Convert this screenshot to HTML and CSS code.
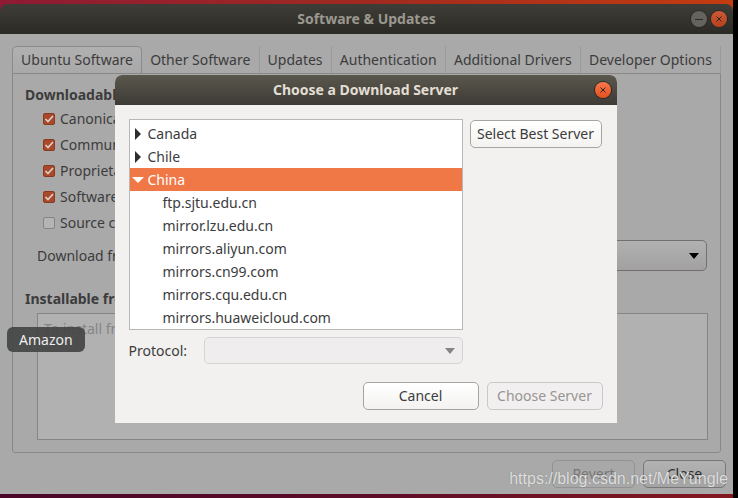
FILE: index.html
```html
<!DOCTYPE html>
<html lang="en">
<head>
    <meta charset="utf-8">
    <meta name="viewport" content="width=device-width, initial-scale=1.0">
    <title>Software &amp; Updates</title>
    <link rel="stylesheet" href="styles.css">
</head>
<body>
    <div class="desktop">
        <div class="window">
            <!-- title bar -->
            <header class="titlebar">
                <h1 class="title">Software &amp; Updates</h1>
                <div class="titleBtns">
                    <button class="winBtn" type="button" aria-label="Minimize">
                        <svg viewBox="0 0 16 16"><path d="M4 8.5h8"/></svg>
                    </button>
                    <button class="winBtn closeBtn" type="button" aria-label="Close window">
                        <svg viewBox="0 0 16 16"><path d="M5.5 5.5l5 5M10.5 5.5l-5 5"/></svg>
                    </button>
                </div>
            </header>

            <main class="windowBody">
                <div class="tabs" role="tablist">
                    <button class="tab active" type="button" role="tab" aria-selected="true">Ubuntu Software</button>
                    <button class="tab" type="button" role="tab">Other Software</button>
                    <button class="tab" type="button" role="tab">Updates</button>
                    <button class="tab" type="button" role="tab">Authentication</button>
                    <button class="tab" type="button" role="tab">Additional Drivers</button>
                    <button class="tab" type="button" role="tab">Developer Options</button>
                </div>

                <section class="panel">
                    <h2 class="heading">Downloadable from the Internet</h2>
                    <div class="checks">
                        <label class="check"><input type="checkbox" checked>Canonical-supported software (main)</label>
                        <label class="check"><input type="checkbox" checked>Community-maintained software (universe)</label>
                        <label class="check"><input type="checkbox" checked>Proprietary drivers for devices (restricted)</label>
                        <label class="check"><input type="checkbox" checked>Software restricted by copyright (multiverse)</label>
                        <label class="check"><input type="checkbox">Source code</label>
                    </div>
                    <div class="serverRow">
                        <label for="server">Download from:</label>
                        <div class="combo">
                            <select id="server"><option></option></select>
                            <svg class="arrow" viewBox="0 0 10 6"><path d="M0 0h10L5 6z"/></svg>
                        </div>
                    </div>
                    <h2 class="heading">Installable from CD-ROM/DVD</h2>
                    <div class="cdList">To install from a CD-ROM or DVD, insert the medium into the drive.</div>
                </section>

                <div class="actions">
                    <button class="btn dim" type="button" disabled>Revert</button>
                    <button class="btn dark" type="button">Close</button>
                </div>
            </main>

            <!-- server chooser -->
            <div class="dialog" role="dialog" aria-labelledby="dialogTitle">
                <header class="titlebar dialogBar">
                    <h2 class="title" id="dialogTitle">Choose a Download Server</h2>
                    <div class="titleBtns">
                        <button class="winBtn closeBtn" type="button" aria-label="Close dialog">
                            <svg viewBox="0 0 16 16"><path d="M5.5 5.5l5 5M10.5 5.5l-5 5"/></svg>
                        </button>
                    </div>
                </header>
                <div class="dialogBody">
                    <ul class="tree" role="tree">
                        <li class="node" role="treeitem"><svg viewBox="0 0 12 12"><path d="M3 0l6 6-6 6z"/></svg>Canada</li>
                        <li class="node" role="treeitem"><svg viewBox="0 0 12 12"><path d="M3 0l6 6-6 6z"/></svg>Chile</li>
                        <li class="node selected" role="treeitem" aria-selected="true"><svg viewBox="0 0 12 12"><path d="M0 3h12l-6 6z"/></svg>China</li>
                        <li class="node leaf" role="treeitem">ftp.sjtu.edu.cn</li>
                        <li class="node leaf" role="treeitem">mirror.lzu.edu.cn</li>
                        <li class="node leaf" role="treeitem">mirrors.aliyun.com</li>
                        <li class="node leaf" role="treeitem">mirrors.cn99.com</li>
                        <li class="node leaf" role="treeitem">mirrors.cqu.edu.cn</li>
                        <li class="node leaf" role="treeitem">mirrors.huaweicloud.com</li>
                    </ul>
                    <div class="side">
                        <button class="btn" type="button">Select Best Server</button>
                    </div>
                    <div class="protocol">
                        <label for="protocol">Protocol:</label>
                        <div class="combo">
                            <select id="protocol" disabled><option></option></select>
                            <svg class="arrow" viewBox="0 0 10 6"><path d="M0 0h10L5 6z"/></svg>
                        </div>
                    </div>
                </div>
                <footer class="dialogActions">
                    <button class="btn" type="button">Cancel</button>
                    <button class="btn" type="button" disabled>Choose Server</button>
                </footer>
            </div>
        </div>

        <div class="tooltip" role="tooltip">Amazon</div>
        <div class="watermark">https://blog.csdn.net/MeYungle</div>
    </div>
</body>
</html>
```
FILE: styles.css
```css
* {
    box-sizing: border-box;
}

body {
    margin: 0;
    background: #000;
    color: #3c3c3c;
    font: 14px/20px "Noto Sans", "Open Sans", sans-serif;
}

button, select {
    font: inherit;
    color: inherit;
}

h1, h2, ul {
    margin: 0;
    padding: 0;
    font-size: 14px;
}

/* wallpaper shows above and below the window */
.desktop {
    position: relative;
    min-height: 100vh;
    margin-right: 5px;
    padding: 4px 0;
    background:
        linear-gradient(90deg, #8e1a34, #a02a20 50%, #c43c10) top / 100% 12px no-repeat,
        linear-gradient(90deg, #4a0628, #5c0c28 50%, #841820);
}

.window {
    position: relative;
}

/* title bars */
.titlebar {
    display: flex;
    align-items: center;
    position: relative;
    height: 30px;
    padding: 0 6px;
    border-radius: 7px 7px 0 0;
    background: linear-gradient(#3e3d37, #2b2a26);
    color: #9b988f;
}

.title {
    flex: 1;
    text-align: center;
}

.titleBtns {
    display: flex;
    gap: 4px;
    position: absolute;
    right: 6px;
}

.winBtn {
    width: 16px;
    height: 16px;
    padding: 0;
    border: 0;
    border-radius: 50%;
    background: #65635d;
    box-shadow: 0 0 0 1px #2a2925;
}

.winBtn svg {
    display: block;
    fill: none;
    stroke: #2a2925;
    stroke-width: 1;
}

.closeBtn {
    background: linear-gradient(#cc5a36, #b8401c);
}

/* main window */
.windowBody {
    padding: 12px 7px 6px 12px;
    background: #a9a9a9;
}

.tabs {
    display: flex;
    height: 27px;
    margin-right: 5px;
}

.tab {
    flex: 1 1 auto;
    padding: 0;
    border: 0;
    border-right: 1px solid #9a9a9a;
    background: none;
    white-space: nowrap;
}

.tab.active {
    border: 1px solid #8a8a8a;
    border-bottom: 0;
    border-radius: 5px 5px 0 0;
    background: linear-gradient(#b0b0b0, #a9a9a9);
}

.panel {
    margin-right: 5px;
    padding: 11px 12px 12px;
    border: 1px solid #888;
    border-radius: 0 0 3px 3px;
}

.checks {
    padding: 1px 0 0 18px;
}

.check {
    display: flex;
    align-items: center;
    gap: 5px;
    height: 26px;
}

.check input {
    appearance: none;
    width: 12px;
    height: 12px;
    margin: 0;
    border: 1px solid #858585;
    border-radius: 2px;
    background: #b4b4b4;
}

.check input:checked {
    border-color: #8a3a20;
    background: #a8492c url("data:image/svg+xml,%3Csvg xmlns='http://www.w3.org/2000/svg' viewBox='0 0 10 10'%3E%3Cpath d='M1.5 5l2.5 2.5L9 2' fill='none' stroke='%23e0cfc6' stroke-width='1.7'/%3E%3C/svg%3E");
}

.serverRow {
    display: flex;
    align-items: center;
    gap: 12px;
    padding: 4px 1px 18px 12px;
}

.combo {
    flex: 1;
    position: relative;
}

.combo select {
    appearance: none;
    display: block;
    width: 100%;
    height: 31px;
    border: 1px solid #707070;
    border-radius: 5px;
    background: linear-gradient(#b1b1b1, #a2a0a1);
}

.arrow {
    position: absolute;
    top: 50%;
    right: 8px;
    width: 10px;
    height: 6px;
    margin-top: -3px;
    fill: #000;
    pointer-events: none;
}

.cdList {
    height: 127px;
    margin: 4px 0 0 12px;
    padding: 5px 6px;
    border: 1px solid #858585;
    background: #b2b1b2;
    color: #858585;
}

.actions {
    display: flex;
    justify-content: flex-end;
    gap: 8px;
    padding-top: 7px;
}

/* buttons */
.btn {
    min-width: 83px;
    height: 28px;
    padding: 0;
    border: 1px solid #a5a49f;
    border-radius: 5px;
    background: linear-gradient(#fff, #f3f2f1);
}

.btn:disabled {
    border-color: #cbc9c7;
    background: #f1eff0;
    color: #989590;
}

.btn.dim {
    border-color: #929292;
    background: #a8a8a8;
    color: #777;
}

.btn.dark {
    border-color: #777;
    background: linear-gradient(#b2b2b2, #a4a4a4);
    color: #2c2c2c;
}

/* dialog */
.dialog {
    position: absolute;
    top: 71px;
    left: 0;
    right: 2px;
    width: 502px;
    margin: 0 auto;
    background: #f2f1ef;
    border-radius: 7px 7px 0 0;
}

.dialogBar {
    background: linear-gradient(#5a574d, #3d3b35);
    color: #e2ded4;
}

.dialogBar .closeBtn {
    background: linear-gradient(#f9784e, #e6501f);
}

.dialogBody {
    display: grid;
    grid-template-columns: 1fr 132px;
    gap: 7px;
    padding: 14px 15px 0 14px;
}

.tree {
    padding-top: 2px;
    border: 1px solid #b9b7b3;
    background: #fff;
    list-style: none;
}

.node {
    display: flex;
    align-items: center;
    gap: 4px;
    height: 23px;
    padding-left: 2px;
}

.node svg {
    width: 12px;
    height: 12px;
    fill: #2d2d2d;
}

.node.leaf {
    padding-left: 33px;
}

.node.selected {
    background: #f07746;
    color: #fff;
}

.node.selected svg {
    fill: #fff;
}

.side .btn {
    width: 100%;
    margin-top: 1px;
}

.protocol {
    display: flex;
    align-items: center;
    gap: 17px;
}

.protocol select {
    height: 27px;
    border-color: #c9c7c8;
    background: #eeecee;
}

.protocol .arrow {
    fill: #858585;
}

.dialogActions {
    display: flex;
    justify-content: flex-end;
    gap: 8px;
    padding: 18px 14px 13px;
}

.dialogActions .btn {
    width: 116px;
}

/* launcher tooltip */
.tooltip {
    position: absolute;
    top: 327px;
    left: 7px;
    padding: 3px 12px 2px;
    border-radius: 6px;
    background: rgba(65, 66, 66, 0.9);
    color: #eee;
}

.watermark {
    position: absolute;
    right: 5px;
    bottom: 9px;
    color: rgba(255, 255, 255, 0.75);
    font: 16px/20px "Liberation Sans", Arial, sans-serif;
    text-shadow: 0 0 1px #777;
}
```
